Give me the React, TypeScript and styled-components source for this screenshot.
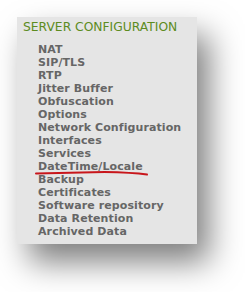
import React from 'react';
import styled, { createGlobalStyle } from 'styled-components';

const items = [
  'NAT',
  'SIP/TLS',
  'RTP',
  'Jitter Buffer',
  'Obfuscation',
  'Options',
  'Network Configuration',
  'Interfaces',
  'Services',
  'DateTime/Locale',
  'Backup',
  'Certificates',
  'Software repository',
  'Data Retention',
  'Archived Data',
];

const GlobalStyle = createGlobalStyle`
  html, body {
    margin: 0;
    padding: 0;
    background: #ffffff;
  }
`;

const Page = styled.div`
  min-height: 292px;
  padding: 17px 0 0 17px;
  box-sizing: border-box;
`;

const Panel = styled.div`
  width: 180px;
  height: 227px;
  box-sizing: border-box;
  background: #e5e5e5;
  padding: 3px 0 0 6px;
  box-shadow: 12px 18px 30px rgba(0, 0, 0, 0.5);
  font-family: 'DejaVu Sans', Verdana, sans-serif;
`;

const Title = styled.div`
  color: #5d8c1f;
  font-size: 12.3px;
  line-height: 15px;
`;

const List = styled.ul`
  list-style: none;
  margin: 8px 0 0;
  padding: 0 0 0 15px;
`;

const Item = styled.li`
  position: relative;
  color: #666666;
  font-size: 11px;
  font-weight: bold;
  line-height: 13px;
  letter-spacing: 0.1px;
`;

const Scribble = styled.svg`
  position: absolute;
  left: -2px;
  top: 10px;
  overflow: visible;
`;

export default function App() {
  return (
    <Page>
      <GlobalStyle />
      <Panel>
        <Title>SERVER CONFIGURATION</Title>
        <List>
          {items.map((t) => (
            <Item key={t}>
              {t}
              {t === 'DateTime/Locale' && (
                <Scribble width="112" height="6" viewBox="0 0 112 6">
                  <path d="M0 3.5 C20 3 45 2.5 69 2" stroke="#c8161b" strokeWidth="2" fill="none" strokeLinecap="round" />
                  <path d="M68 2 C85 2.3 100 3 111 4.5" stroke="#c8161b" strokeWidth="2" fill="none" strokeLinecap="round" />
                </Scribble>
              )}
            </Item>
          ))}
        </List>
      </Panel>
    </Page>
  );
}
